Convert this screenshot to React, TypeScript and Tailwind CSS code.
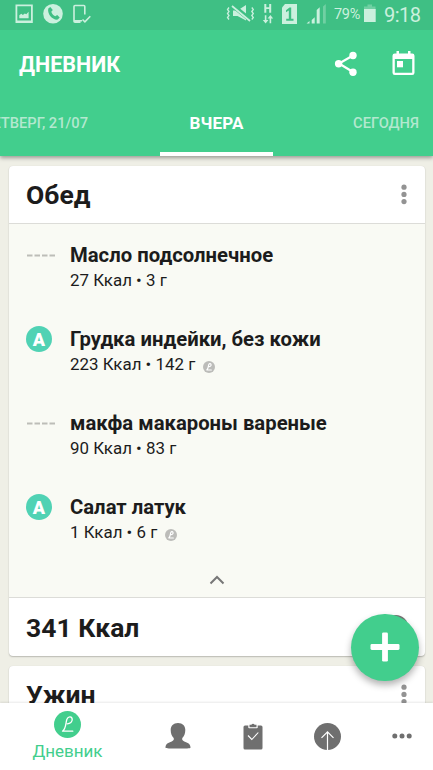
import React from "react";

type Food = { name: string; info: string; grade?: string; verified?: boolean };

const foods: Food[] = [
  { name: "Масло подсолнечное", info: "27 Ккал • 3 г" },
  { name: "Грудка индейки, без кожи", info: "223 Ккал • 142 г", grade: "A", verified: true },
  { name: "макфа макароны вареные", info: "90 Ккал • 83 г" },
  { name: "Салат латук", info: "1 Ккал • 6 г", grade: "A", verified: true },
];

function Monogram({ className, stroke, width }: { className: string; stroke: string; width: number }) {
  return (
    <svg viewBox="0 0 27 27" className={className}>
      <circle cx="13.5" cy="13.5" r="13.5" fill="currentColor" />
      <path
        d="M13.300 12.800C16.200 12.800 18.400 10.800 18.200 8.300C18 5.300 14.300 4.900 12.900 8.200C11.600 11.500 12.300 17.500 8.500 20.200H18.800"
        fill="none"
        stroke={stroke}
        strokeWidth={width}
        strokeLinecap="round"
        strokeLinejoin="round"
      />
    </svg>
  );
}

function StatusBar() {
  return (
    <div className="flex h-[30px] shrink-0 items-center bg-[#3fbf84] text-[#cbf0de]">
      <svg width="110" height="30" viewBox="0 0 110 30" fill="currentColor" className="shrink-0">
        <path fillRule="evenodd" d="M15.500 4.500h17.300v18.500H15.500zM17.300 6.300v14.200h13.700V6.300z" />
        <path d="M19.300 18.300v-3l2-1.500 1.500 1.200 2-1.500 1.500.7 2.300-2.500v6.600z" />
        <circle cx="53" cy="13.700" r="9.800" />
        <path
          d="M48.300 8.500l2-1.600 2.500 3-1.500 1.800c.7 2 2 3.600 4 4.500l1.900-1.200 2.500 2.600-1.900 2c-5.500.7-10.800-5.800-9.500-11.100z"
          fill="#3fbf84"
        />
        <path
          d="M84.800 14.500V6.500q0-1-1-1H75q-1 0-1 1v14.700q0 1 1 1h5.500M74 20.700h8M82.500 19.500l2.400 2.300 5.400-5.600"
          fill="none"
          stroke="currentColor"
          strokeWidth="1.600"
        />
      </svg>
      <div className="flex-1" />
      <svg width="106" height="30" viewBox="222 0 106 30" fill="currentColor" className="shrink-0">
        <path d="M233 10.500h4.500l8.500-5.500v15.500l-8.500-4.500H233z" />
        <path d="M231.500 4.500l19.500 16" stroke="#3fbf84" strokeWidth="4.500" />
        <path d="M232 6l18 15" stroke="currentColor" strokeWidth="1.700" />
        <path
          d="M229 7.500l-1.500 2 1.500 2-1.500 2 1.500 2-1.500 2 1.500 2M251.800 7.500l1.500 2-1.500 2 1.500 2-1.500 2 1.500 2-1.500 2"
          fill="none"
          stroke="currentColor"
          strokeWidth="1.300"
        />
        <path d="M264.300 4h2v3.200h2.900V4h2v8.700h-2V9h-2.900v3.700h-2z" />
        <path d="M264.800 15.300h1.600v4.700h2l-2.800 3.500-2.800-3.500h2zM271.200 23.200h-1.600v-4.700h-2l2.800-3.500 2.800 3.500h-2z" />
        <path d="M282 7.500L285 4h12v20h-15z" />
        <path d="M286 10.200l3.500-2.700h1.700v11.300h2.300v1.900h-7.300v-1.900h2.600v-8.300l-2.800 1.800z" fill="#3fbf84" />
        <path d="M306.500 23.500l3-2.500v2.500zM311.700 20l3-2.700v6.200h-3zM316.700 10l3-2.700v16.200h-3z" />
        <path d="M323 6.500l2.800-2.500v19.500H323z" opacity=".35" />
      </svg>
      <span className="ml-[6px] w-[27px] shrink-0 whitespace-nowrap text-[14.500px] leading-none tracking-[-0.300px]">79%</span>
      <svg width="14" height="30" viewBox="0 0 14 30" fill="currentColor" className="ml-[2px] shrink-0">
        <path d="M4.500 4.500h4.500v2h3.500v4H1v-4h3.500z" opacity=".35" />
        <path d="M1 9h11.700v13H1z" />
      </svg>
      <span className="ml-[7px] w-[49px] shrink-0 whitespace-nowrap text-[20px] leading-none tracking-[-0.500px]">9:18</span>
    </div>
  );
}

function Toolbar() {
  return (
    <div className="flex h-[70px] items-center pr-[18px] pl-[19px] text-white">
      <h1 className="flex-1 pt-px text-[21.500px] font-bold">ДНЕВНИК</h1>
      <svg width="24" height="26" viewBox="0 0 24 26" className="mr-[34px] mb-[3px]" fill="currentColor">
        <path d="M19 4.500L5 12.500l14 8.500" fill="none" stroke="currentColor" strokeWidth="2.200" />
        <circle cx="4.600" cy="12.800" r="3.700" />
        <circle cx="19" cy="4.500" r="3.700" />
        <circle cx="19" cy="21.300" r="3.700" />
      </svg>
      <svg width="23" height="26" viewBox="0 0 23 26" fill="currentColor" className="mb-[5px]">
        <path
          fillRule="evenodd"
          d="M4.500 1H7v2.500h9V1h2.500v2.500h1.700q2.300 0 2.300 2.300v17q0 2.200-2.300 2.200H2.800Q.5 25 .5 22.800v-17q0-2.300 2.300-2.300h1.700zM2.800 9v13.700h17.400V9z"
        />
        <path d="M5 11h6v6.300H5z" />
      </svg>
    </div>
  );
}

function Tabs() {
  return (
    <div className="flex h-[55.500px] justify-between text-[14.700px] font-medium text-[#b3e8cf]">
      <div className="flex w-[160px] justify-end overflow-hidden pr-[72px] pt-[12px] whitespace-nowrap">
        ЧЕТВЕРГ, 21/07
      </div>
      <div className="w-[113px] border-b-[4px] border-white pt-[11px] text-center text-[17px] font-bold tracking-[0.200px] text-white">
        ВЧЕРА
      </div>
      <div className="w-[160px] pt-[12px] pr-[14px] text-right">СЕГОДНЯ</div>
    </div>
  );
}

function MealHeader({ title }: { title: string }) {
  return (
    <div className="flex h-[57.500px] items-center justify-between pt-px pr-[18px] pl-[17.500px]">
      <h2 className="pt-px text-[26.500px] font-bold text-[#1c1c1c]">{title}</h2>
      <svg width="6" height="22" viewBox="0 0 6 22" fill="#939393">
        <circle cx="3" cy="3.200" r="2.600" />
        <circle cx="3" cy="10.400" r="2.600" />
        <circle cx="3" cy="17.600" r="2.600" />
      </svg>
    </div>
  );
}

function FoodRow({ food }: { food: Food }) {
  return (
    <li className="flex h-[84.100px] pl-[17.500px]">
      <div className="flex h-[27px] w-[44px] items-center">
        {food.grade ? (
          <span className="flex size-[26px] items-center justify-center rounded-full bg-[#50d2b4] font-['Roboto'] text-[18px] font-black text-white">
            {food.grade}
          </span>
        ) : (
          <svg width="28" height="3" className="mt-px ml-[0.500px]">
            <path d="M0 1.500h28" stroke="#bdbdb8" strokeWidth="2" strokeDasharray="5.500 2" />
          </svg>
        )}
      </div>
      <div>
        <div className="h-[27px] text-[20.300px] leading-[27px] font-bold whitespace-nowrap">{food.name}</div>
        <div className="flex h-[24px] items-center text-[16.900px]">
          {food.info}
          {food.verified && (
            <Monogram className="mt-[5px] ml-[8px] size-[12px] text-[#bcbcb9]" stroke="#fff" width={2.6} />
          )}
        </div>
      </div>
    </li>
  );
}

function BottomNav() {
  return (
    <nav className="absolute inset-x-0 bottom-0 flex h-[67.500px] bg-white text-[#6f6f6f] shadow-[0_-1px_2px_rgba(0,0,0,0.09)]">
      <div className="flex w-[135px] flex-col items-center pt-[8.500px] text-[#42ce8d]">
        <Monogram className="size-[27px]" stroke="#fff" width={1.3} />
        <span className="text-[17px] leading-[26px]">Дневник</span>
      </div>
      <div className="flex w-[86px] items-center justify-center">
        <svg width="26" height="26" viewBox="0 0 26 26" fill="currentColor">
          <path d="M13 0c4.700 0 7.300 3 7.300 7 0 3.500-1.200 6.300-3 8-.5 1.800.2 2.700 2 3.400 3.300 1.200 6.200 2 6.200 6.300 0 .6-5 .9-12.500.9S.5 25.300.5 24.700c0-4.300 2.900-5.100 6.200-6.300 1.800-.7 2.500-1.600 2-3.400-1.800-1.700-3-4.500-3-8 0-4 2.600-7 7.300-7z" />
        </svg>
      </div>
      <div className="flex w-[63px] items-center justify-center">
        <svg width="20" height="27" viewBox="0 0 20 27" fill="currentColor">
          <path d="M2 2.500h3.300v2q0 .8.800.8h7.800q.8 0 .8-.8v-2H18q1.500 0 1.500 1.500v21q0 1.500-1.500 1.500H2Q.5 26.500.5 25V4Q.5 2.500 2 2.500z" />
          <path d="M6.500 1.700h1.800Q10-.4 11.700 1.700h1.800v2.500h-7z" />
          <path d="M5 12.500l3.800 4 6.500-7" fill="none" stroke="#fff" strokeWidth="1.100" />
        </svg>
      </div>
      <div className="flex w-[86px] items-center justify-center">
        <svg width="27" height="27" viewBox="0 0 27 27">
          <circle cx="13.500" cy="13.500" r="13.500" fill="currentColor" />
          <path d="M13.500 27V9M7.500 14.800l6-6 6 6" fill="none" stroke="#fff" strokeWidth="1.200" />
        </svg>
      </div>
      <div className="flex w-[63px] items-center justify-center">
        <svg width="20" height="6" viewBox="0 0 20 6" fill="currentColor">
          <circle cx="2.800" cy="3" r="2.500" />
          <circle cx="10" cy="3" r="2.500" />
          <circle cx="17.200" cy="3" r="2.500" />
        </svg>
      </div>
    </nav>
  );
}

const card = "mx-[8.500px] rounded-[4px] bg-white shadow-[0_1px_1.500px_rgba(0,0,0,0.22),0_0_1px_rgba(0,0,0,0.1)]";

export default function App() {
  return (
    <div className="relative flex h-[770px] w-[433px] flex-col overflow-hidden bg-[#efefe6] font-['Roboto','Noto_Sans',sans-serif] text-[#1c1c1c]">
      <header className="relative shrink-0 bg-[#42ce8d] shadow-[0_2px_4px_rgba(0,0,0,0.35)]">
        <StatusBar />
        <Toolbar />
        <Tabs />
      </header>
      <main className="flex flex-col gap-[9.500px] pt-[10px]">
        <section className={card + " relative"}>
          <MealHeader title="Обед" />
          <div className="flex h-[375px] flex-col border-y border-[#dcdcd8] bg-[#f9faf4] pt-[17.500px]">
            <ul className="h-[331px] shrink-0">
              {foods.map((f) => (
                <FoodRow key={f.name} food={f} />
              ))}
            </ul>
            <svg width="16" height="10" viewBox="0 0 16 10" className="mx-auto mt-[2px] shrink-0">
              <path d="M1.500 8.500L8 2l6.500 6.500" fill="none" stroke="#777" strokeWidth="2" />
            </svg>
          </div>
          <div className="flex h-[58px] items-center justify-between pr-[17px] pl-[17.500px] pt-[2px] text-[26.500px] font-bold">
            341 Ккал
            <span className="mb-[2px] size-[24px] rounded-full bg-[#757575]" />
          </div>
        </section>
        <section className={card + " h-[120px]"}>
          <MealHeader title="Ужин" />
        </section>
      </main>
      <button
        aria-label="Добавить"
        className="absolute top-[613.500px] left-[351px] flex size-[67.500px] items-center justify-center rounded-full bg-[#42ce8d] shadow-[0_4px_7px_rgba(0,0,0,0.3)]"
      >
        <svg width="30" height="30" viewBox="0 0 30 30" fill="#fff">
          <rect x="12.100" y="0.500" width="5.800" height="29" rx="1.300" />
          <rect x="0.500" y="12.100" width="29" height="5.800" rx="1.300" />
        </svg>
      </button>
      <BottomNav />
    </div>
  );
}
